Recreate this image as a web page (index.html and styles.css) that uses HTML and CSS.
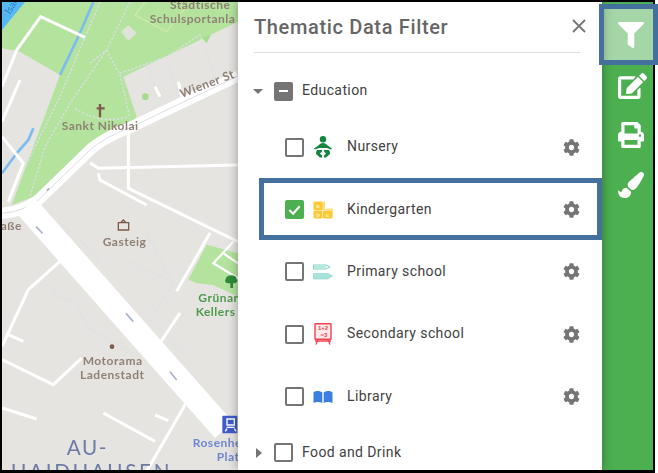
FILE: index.html
```html
<!DOCTYPE html>
<html lang="en">
<head>
<meta charset="utf-8">
<title>Thematic Data Filter</title>
<link rel="stylesheet" href="styles.css">
</head>
<body>
<svg class="defs" aria-hidden="true">
  <symbol id="cog" viewBox="0 0 512 512"><path d="M487.4 315.7l-42.6-24.6c4.3-23.2 4.3-47 0-70.2l42.6-24.6c4.9-2.8 7.1-8.6 5.5-14-11.1-35.6-30-67.8-54.7-94.6-3.8-4.1-10-5.1-14.8-2.3L380.8 110c-17.9-15.4-38.5-27.3-60.8-35.1V25.8c0-5.6-3.9-10.5-9.4-11.7-36.7-8.2-74.3-7.8-109.2 0-5.5 1.2-9.4 6.1-9.4 11.7V75c-22.2 7.9-42.8 19.8-60.8 35.1L88.7 85.5c-4.9-2.8-11-1.9-14.8 2.3-24.7 26.7-43.6 58.9-54.7 94.6-1.7 5.4.6 11.2 5.5 14L67.3 221c-4.3 23.2-4.3 47 0 70.2l-42.6 24.6c-4.9 2.8-7.1 8.6-5.5 14 11.1 35.6 30 67.8 54.7 94.6 3.8 4.1 10 5.1 14.8 2.3l42.6-24.6c17.9 15.4 38.5 27.3 60.8 35.1v49.2c0 5.6 3.9 10.5 9.4 11.7 36.7 8.2 74.3 7.8 109.2 0 5.5-1.2 9.4-6.1 9.4-11.7v-49.2c22.2-7.9 42.8-19.8 60.8-35.1l42.6 24.6c4.9 2.8 11 1.9 14.8-2.3 24.7-26.7 43.6-58.9 54.7-94.6 1.5-5.5-.7-11.3-5.6-14.1zM256 336c-44.1 0-80-35.9-80-80s35.9-80 80-80 80 35.9 80 80-35.9 80-80 80z"/></symbol>
</svg>
<div class="frame">
  <svg class="map" viewBox="6 6 708 1404" preserveAspectRatio="none" aria-label="Map">
    <rect class="m-land" x="0" y="0" width="720" height="1420"/>
    <path class="m-park" d="M70 6 L6 90 L6 145 L60 155 L180 225 L85 480 L35 615 L100 590 L270 430 L360 395 L410 350 L370 230 L714 65 L714 6 Z"/>
    <path class="m-park" d="M565 839 L620 734 L714 760 L714 890 L640 855 L590 850 Z"/>
    <path class="m-water" d="M6 6 L75 6 L6 90 Z"/>
    <text class="m-water-label" transform="translate(30 44) rotate(-58)">Isar</text>
    <path class="m-stream" d="M280 6 L235 110 L180 225"/>
    <path class="m-stream" d="M100 385 L85 420 L50 460 L6 520"/>
    <path class="m-plaza" d="M363 95 L385 75 L410 100 L385 122 Z"/>
    <path class="m-spot" d="M605 112 L633 105 L620 130 Z"/>
    <circle class="m-spot" cx="436" cy="290" r="10"/>
    <path class="m-field" d="M435 6 L405 45 L500 95 L560 20"/>
    <path class="m-path" d="M390 6 L320 150 L270 190 M320 150 L210 310 L135 440 L90 590 M320 150 L360 225 L390 355 M225 325 Q300 375 385 350 M360 220 L500 170 L600 105 L640 220 M440 190 L480 290 M500 170 L540 300"/>
    <path class="m-path" d="M300 6 L180 290 L80 490"/>
    <path class="m-path" d="M155 885 L185 845 M155 880 L230 910 L265 985 L400 1060 M240 720 L300 790 M440 700 L520 850 L450 960 L560 1070 M380 780 L520 850"/>
    <path class="m-road" d="M6 260 L50 150 L122 50 L255 112"/>
    <path class="m-road" d="M60 240 L6 365"/>
    <path class="m-road" d="M6 410 L70 490 L25 605"/>
    <path class="m-road" d="M385 400 L385 565 L714 725"/>
    <path class="m-road" d="M270 488 L295 505 L714 495"/>
    <path class="m-road" d="M295 520 L300 540 L440 615"/>
    <path class="m-road" d="M480 290 L465 260 M545 290 L535 245"/>
    <path class="m-road" d="M6 1039 L85 869 L180 784"/>
    <path class="m-road" d="M6 1079 L160 1154 L245 1074"/>
    <path class="m-road" d="M310 1239 L465 1324"/>
    <path class="m-road" d="M570 1189 L440 1414"/>
    <path class="m-road" d="M630 699 L530 874"/>
    <path class="m-road" d="M540 939 L480 1029"/>
    <path class="m-road" d="M6 1224 L110 1257"/>
    <path class="m-road" d="M25 1004 L70 1024"/>
    <path class="m-road" d="M465 1245 L505 1262"/>
    <path class="m-road-thin" d="M700 725 L640 790 L714 835 M670 760 L714 790"/>
    <path class="m-wide" d="M6 640 Q70 635 115 600 L275 445 Q320 410 385 385 L714 228"/>
    <path class="m-thin" d="M6 640 Q70 635 115 600 L275 445 Q320 410 385 385 L714 228"/>
    <path class="m-main" d="M80 620 L672 1290"/>
    <path class="m-arrow" d="M148 565 L140 572 M108 680 L128 700 M378 940 L400 965 M510 1115 L530 1140"/>
    <path class="m-mark" d="M300 312 L300 352 M290 325 L314 325"/>
    <path class="m-mark-thin" d="M355 668 H386 V690 H355 Z M362 668 L370 660 L378 668"/>
    <circle class="m-dot" cx="336" cy="1040" r="7"/>
    <path class="m-tree" d="M693 826 a18 13 0 0 1 17 12 a10 8 0 0 1 -6 12 h-5 v14 h-8 v-14 h-6 a10 8 0 0 1 -8 -12 a18 13 0 0 1 16 -12 Z"/>
    <rect class="m-station" x="667" y="1247" width="45" height="53" rx="3"/>
    <path class="m-station-glyph" d="M681 1257 h22 v18 h-22 Z M681 1286 L676 1294 M703 1286 L708 1294 M680 1282 h24"/>
    <text class="m-label" x="510" y="26">Städtische</text>
    <text class="m-label" x="449" y="70">Schulsportanla</text>
    <text class="m-label" x="185" y="390">Sankt Nikolai</text>
    <text class="m-label" transform="translate(545 294) rotate(-21)">Wiener St</text>
    <text class="m-label" x="2" y="690">aße</text>
    <text class="m-label" x="308" y="737">Gasteig</text>
    <text class="m-label" x="248" y="1094">Motorama</text>
    <text class="m-label" x="240" y="1137">Ladenstadt</text>
    <text class="m-label m-park-label" x="595" y="907">Grünar</text>
    <text class="m-label m-park-label" x="587" y="949">Kellers</text>
    <text class="m-label m-station-label" x="578" y="1342">Rosenhe</text>
    <text class="m-label m-station-label" x="650" y="1384">Plat</text>
    <text class="m-district" x="200" y="1364">AU-</text>
    <text class="m-district m-district-wide" x="32" y="1436">HAIDHAUSEN</text>
  </svg>

  <section class="panel">
    <header class="panel-head">
      <h1 class="panel-title">Thematic Data Filter</h1>
      <svg class="close" viewBox="0 0 16 16"><path d="M2 2 L14 14 M14 2 L2 14"/></svg>
    </header>
    <div class="group">
      <span class="caret caret-down"></span>
      <span class="box box-mixed"></span>
      <span class="group-label">Education</span>
    </div>
    <div class="item">
      <span class="box"></span>
      <svg class="theme" viewBox="0 0 20 22">
        <circle class="i-green" cx="10" cy="3.3" r="3.2"/>
        <path class="i-green" d="M10 7 C12.5 7 13 8 14 9 L19 12.5 L18 13.6 L14 12 L6 12 L2 13.6 L1 12.5 L6 9 C7 8 7.5 7 10 7 Z"/>
        <path class="i-green" d="M4 14 H9 V15.5 L7 17.5 L9 19.5 V21.5 H7 L3 18 Q3 15 4 14 Z M16 14 H11 V15.5 L13 17.5 L11 19.5 V21.5 H13 L17 18 Q17 15 16 14 Z"/>
      </svg>
      <span class="item-label">Nursery</span>
      <svg class="cog"><use href="#cog"/></svg>
    </div>
    <div class="item">
      <span class="box box-checked"><svg class="tick" viewBox="0 0 18 18"><path d="M3.5 9.5 L7.5 13.5 L14.5 5.5"/></svg></span>
      <svg class="theme" viewBox="0 0 20 18">
        <path class="i-yellow-soft" d="M9 1 L12 0.5 V9 H9 Z M12 9 L13.5 7.5 H20 L19 9.5 Z M19 9 L20 8 V16 L19 17.5 Z"/>
        <rect class="i-yellow" x="0.5" y="0.5" width="9" height="8.5" rx="1"/>
        <rect class="i-yellow" x="0.5" y="9.5" width="9" height="8" rx="1"/>
        <rect class="i-yellow" x="10" y="9.5" width="9" height="8" rx="1"/>
        <text class="i-block" x="5" y="7">a</text>
        <text class="i-block" x="5" y="15.5">b</text>
        <text class="i-block" x="14.5" y="15.5">c</text>
      </svg>
      <span class="item-label">Kindergarten</span>
      <svg class="cog"><use href="#cog"/></svg>
    </div>
    <div class="item">
      <span class="box"></span>
      <svg class="theme" viewBox="0 0 20 16">
        <path class="i-teal-line" d="M0.5 1 H13 L17 3 L13 5 H0.5 Z M0.5 3 H13"/>
        <path class="i-teal" d="M0.5 9.5 H15 L19.5 12 L15 15 H0.5 Z"/>
      </svg>
      <span class="item-label">Primary school</span>
      <svg class="cog"><use href="#cog"/></svg>
    </div>
    <div class="item">
      <span class="box"></span>
      <svg class="theme" viewBox="0 0 20 22">
        <rect class="i-board" x="2" y="0.8" width="16" height="15.5" rx="0.5"/>
        <path class="i-red-line" d="M5 16.5 L3 21.5 M15 16.5 L17 21.5 M2 18 H18"/>
        <text class="i-sum" x="10" y="7" text-anchor="middle">1+2</text>
        <text class="i-sum" x="11" y="13.5" text-anchor="middle">=3</text>
      </svg>
      <span class="item-label">Secondary school</span>
      <svg class="cog"><use href="#cog"/></svg>
    </div>
    <div class="item">
      <span class="box"></span>
      <svg class="theme" viewBox="0 0 20 14">
        <path class="i-blue" d="M0.5 2.5 C2 0.5 7 0.5 9.3 2.5 V13 C7 11.8 3 11.8 0.5 13 Z M19.5 2.5 C18 0.5 13 0.5 10.7 2.5 V13 C13 11.8 17 11.8 19.5 13 Z"/>
      </svg>
      <span class="item-label">Library</span>
      <svg class="cog"><use href="#cog"/></svg>
    </div>
    <div class="group">
      <span class="caret caret-right"></span>
      <span class="box"></span>
      <span class="group-label">Food and Drink</span>
    </div>
  </section>

  <nav class="toolbar">
    <div class="tool tool-active">
      <svg class="tool-icon" viewBox="0 0 512 512"><path d="M487.976 0H24.028C2.71 0-8.047 25.866 7.058 40.971L192 225.941V432c0 7.831 3.821 15.17 10.237 19.662l80 55.98C298.02 518.69 320 507.493 320 487.98V225.941l184.947-184.97C520.021 25.896 509.338 0 487.976 0z"/></svg>
    </div>
    <div class="tool tool-first">
      <svg class="tool-icon tool-edit" viewBox="0 0 576 512"><path d="M402.6 83.2l90.2 90.2c3.8 3.8 3.8 10 0 13.8L274.4 405.6l-92.8 10.3c-12.4 1.4-22.9-9.1-21.5-21.5l10.3-92.8L388.8 83.2c3.8-3.8 10-3.8 13.8 0zm162-22.9l-48.8-48.8c-15.2-15.2-39.9-15.2-55.2 0l-35.4 35.4c-3.8 3.8-3.8 10 0 13.8l90.2 90.2c3.8 3.8 10 3.8 13.8 0l35.4-35.4c15.2-15.3 15.2-40 0-55.2zM384 346.2V448H64V128h229.8c3.2 0 6.2-1.3 8.5-3.5l40-40c7.6-7.6 2.2-20.5-8.5-20.5H48C21.5 64 0 85.5 0 112v352c0 26.5 21.5 48 48 48h352c26.5 0 48-21.5 48-48V306.2c0-10.7-12.9-16-20.5-8.5l-40 40c-2.2 2.3-3.5 5.3-3.5 8.5z"/></svg>
    </div>
    <div class="tool">
      <svg class="tool-icon" viewBox="0 0 512 512"><path d="M448 192V77.25c0-8.49-3.37-16.62-9.37-22.63L393.37 9.37c-6-6-14.14-9.37-22.63-9.37H96C78.33 0 64 14.33 64 32v160c-35.35 0-64 28.65-64 64v112c0 8.84 7.16 16 16 16h48v96c0 17.67 14.33 32 32 32h320c17.67 0 32-14.33 32-32v-96h48c8.84 0 16-7.16 16-16V256c0-35.35-28.65-64-64-64zm-64 256H128v-96h256v96zm0-224H128V64h192v48c0 8.84 7.16 16 16 16h48v96zm48 72c-13.25 0-24-10.75-24-24 0-13.26 10.75-24 24-24s24 10.74 24 24c0 13.25-10.75 24-24 24z"/></svg>
    </div>
    <div class="tool">
      <svg class="tool-icon" viewBox="0 0 512 512"><path d="M167.02 309.34c-40.12 2.58-76.53 17.86-97.19 72.3-2.35 6.21-8 9.98-14.59 9.98-11.11 0-45.46-27.67-55.25-34.35C0 439.62 37.93 512 128 512c75.86 0 128-43.77 128-120.19 0-3.11-.65-6.08-.97-9.13l-88.01-73.34zM457.89 0c-15.16 0-29.37 6.71-40.21 16.45C213.27 199.05 192 203.34 192 257.09c0 13.7 3.25 26.76 8.73 38.7l63.82 53.18c7.21 1.8 14.64 3.03 22.39 3.03 62.11 0 98.11-45.47 211.16-256.46 7.38-14.35 13.9-29.85 13.9-45.99C512 20.64 486 0 457.89 0z"/></svg>
    </div>
  </nav>

  <div class="callout callout-tool"></div>
  <div class="callout callout-row"></div>
</div>
</body>
</html>
```

FILE: styles.css
```css
* { box-sizing: border-box; }
html, body { margin: 0; padding: 0; background: #fff; }
body { width: 658px; height: 473px; overflow: hidden; font-family: Roboto, "Liberation Sans", sans-serif; }
.defs { display: none; }

.frame {
  position: relative;
  display: flex;
  width: 655px;
  height: 473px;
  border: solid #000;
  border-width: 2px 2px 3px 2px;
}

/* map */
.map { flex: 0 0 236px; width: 236px; height: 468px; filter: blur(0.45px); }
.m-land { fill: #e6e4e1; }
.m-park { fill: #b4e39e; }
.m-water { fill: #57b9f4; }
.m-water-label { font-family: Lato, "Noto Sans", sans-serif; font-size: 30px; fill: #2f7fc0; }
.m-stream { fill: none; stroke: #7cbcf0; stroke-width: 8; }
.m-plaza { fill: #dfe3d8; }
.m-spot { fill: #a5dc8d; }
.m-field { fill: none; stroke: #cfeaa8; stroke-width: 4; }
.m-path { fill: none; stroke: #dcdfe8; stroke-width: 4; stroke-dasharray: 7 5; }
.m-road { fill: none; stroke: #fff; stroke-width: 9; }
.m-road-thin { fill: none; stroke: #fff; stroke-width: 7; }
.m-wide { fill: none; stroke: #fff; stroke-width: 34; }
.m-thin { fill: none; stroke: #dcdfe8; stroke-width: 3; }
.m-main { fill: none; stroke: #fff; stroke-width: 72; }
.m-arrow { fill: none; stroke: #aab4d0; stroke-width: 5; }
.m-mark { fill: none; stroke: #7d5a4a; stroke-width: 7; }
.m-mark-thin { fill: #e6e4e1; stroke: #7d5a4a; stroke-width: 4; }
.m-dot { fill: #7d5a4a; }
.m-tree { fill: #2f8a3a; }
.m-station { fill: #3f5cc6; }
.m-station-glyph { fill: none; stroke: #fff; stroke-width: 4; }
.m-label { font-family: Lato, "Noto Sans", sans-serif; font-size: 36px; font-weight: 700; fill: #8f8176; letter-spacing: 1.5px; }
.m-park-label { fill: #4f9a4a; }
.m-station-label { fill: #6f86d0; }
.m-district { font-family: Lato, "Noto Sans", sans-serif; font-size: 62px; fill: #6d7ba6; letter-spacing: 5px; }
.m-district-wide { letter-spacing: 8px; }

/* panel */
.panel {
  position: relative;
  flex: 0 0 364px;
  background: #fff;
  box-shadow: 0 0 10px rgba(0, 0, 0, 0.35);
  overflow: hidden;
}
.panel-head {
  display: flex;
  align-items: center;
  justify-content: space-between;
  height: 51px;
  margin: 0 22px 13px 16px;
  border-bottom: 1px solid #e0e0e0;
}
.panel-title { margin: 0; font-size: 20px; font-weight: 500; color: #666; letter-spacing: 0.65px; }
.close { width: 16px; height: 16px; margin-top: -2px; margin-right: -7px; }
.close path { fill: none; stroke: #757575; stroke-width: 1.8; }

.group { display: flex; align-items: center; height: 50px; padding-left: 15px; }
.item { display: flex; align-items: center; height: 62.4px; padding-left: 47px; }

.box {
  flex: none;
  display: flex;
  width: 19px;
  height: 19px;
  border: 2px solid #757575;
  border-radius: 2px;
  background: #fff;
}
.box-mixed { background: #757575; }
.box-mixed::after { content: ""; width: 9px; height: 2px; margin: auto; background: #fff; }
.box-checked { background: #4caf50; border-color: #4caf50; align-items: center; justify-content: center; }
.tick { width: 17px; height: 17px; flex: none; }
.tick path { fill: none; stroke: #fff; stroke-width: 2.2; }

.caret { flex: none; width: 0; height: 0; border-style: solid; border-color: transparent; }
.caret-down { margin-right: 11px; border-width: 5px 5px 0 5px; border-top-color: #757575; }
.caret-right { margin-left: 3px; margin-right: 12px; border-width: 5px 0 5px 6px; border-left-color: #757575; }

.group-label { margin: 0 0 2px 9px; font-size: 14px; letter-spacing: 0.4px; color: #424242; }
.item-label { flex: 1; margin: 0 0 2px 14px; font-size: 14px; letter-spacing: 0.4px; color: #424242; }

.theme { flex: none; width: 20px; height: 22px; margin-left: 9px; }
.i-green { fill: #12853f; }
.i-yellow { fill: #fdca35; }
.i-yellow-soft { fill: #fddc7a; }
.i-block { font-family: "Liberation Sans", sans-serif; font-size: 6px; font-weight: 700; text-anchor: middle; fill: #fff3c4; }
.i-teal-line { fill: #f2fbf9; stroke: #7fd3c8; stroke-width: 1; }
.i-teal { fill: #a9e2da; stroke: #7fd3c8; stroke-width: 0.6; }
.i-board { fill: #ffeaea; stroke: #f0434f; stroke-width: 1.4; }
.i-red-line { fill: none; stroke: #f0434f; stroke-width: 1.3; }
.i-sum { font-family: "Liberation Sans", sans-serif; font-size: 6px; font-weight: 700; fill: #f0434f; }
.i-blue { fill: #3d7fe0; }

.cog { flex: none; width: 17px; height: 17px; margin-right: 22px; fill: #757575; }

/* toolbar */
.toolbar {
  flex: 0 0 51px;
  display: flex;
  flex-direction: column;
  background: #4caf50;
  padding-top: 7px;
}
.tool { display: flex; align-items: center; flex: none; height: 49.5px; padding-left: 16px; fill: #fff; }
.tool-active { height: 51px; background: #a5d6a7; }
.tool-first { margin-top: 1px; }
.tool-icon { width: 26px; height: 26px; }
.tool-edit { width: 29px; }

/* callouts over the content */
.callout { position: absolute; border: 5px solid #44709d; pointer-events: none; }
.callout-tool { left: 597px; top: 2px; width: 59px; height: 61px; }
.callout-row { left: 257px; top: 176px; width: 343px; height: 62px; }
```
